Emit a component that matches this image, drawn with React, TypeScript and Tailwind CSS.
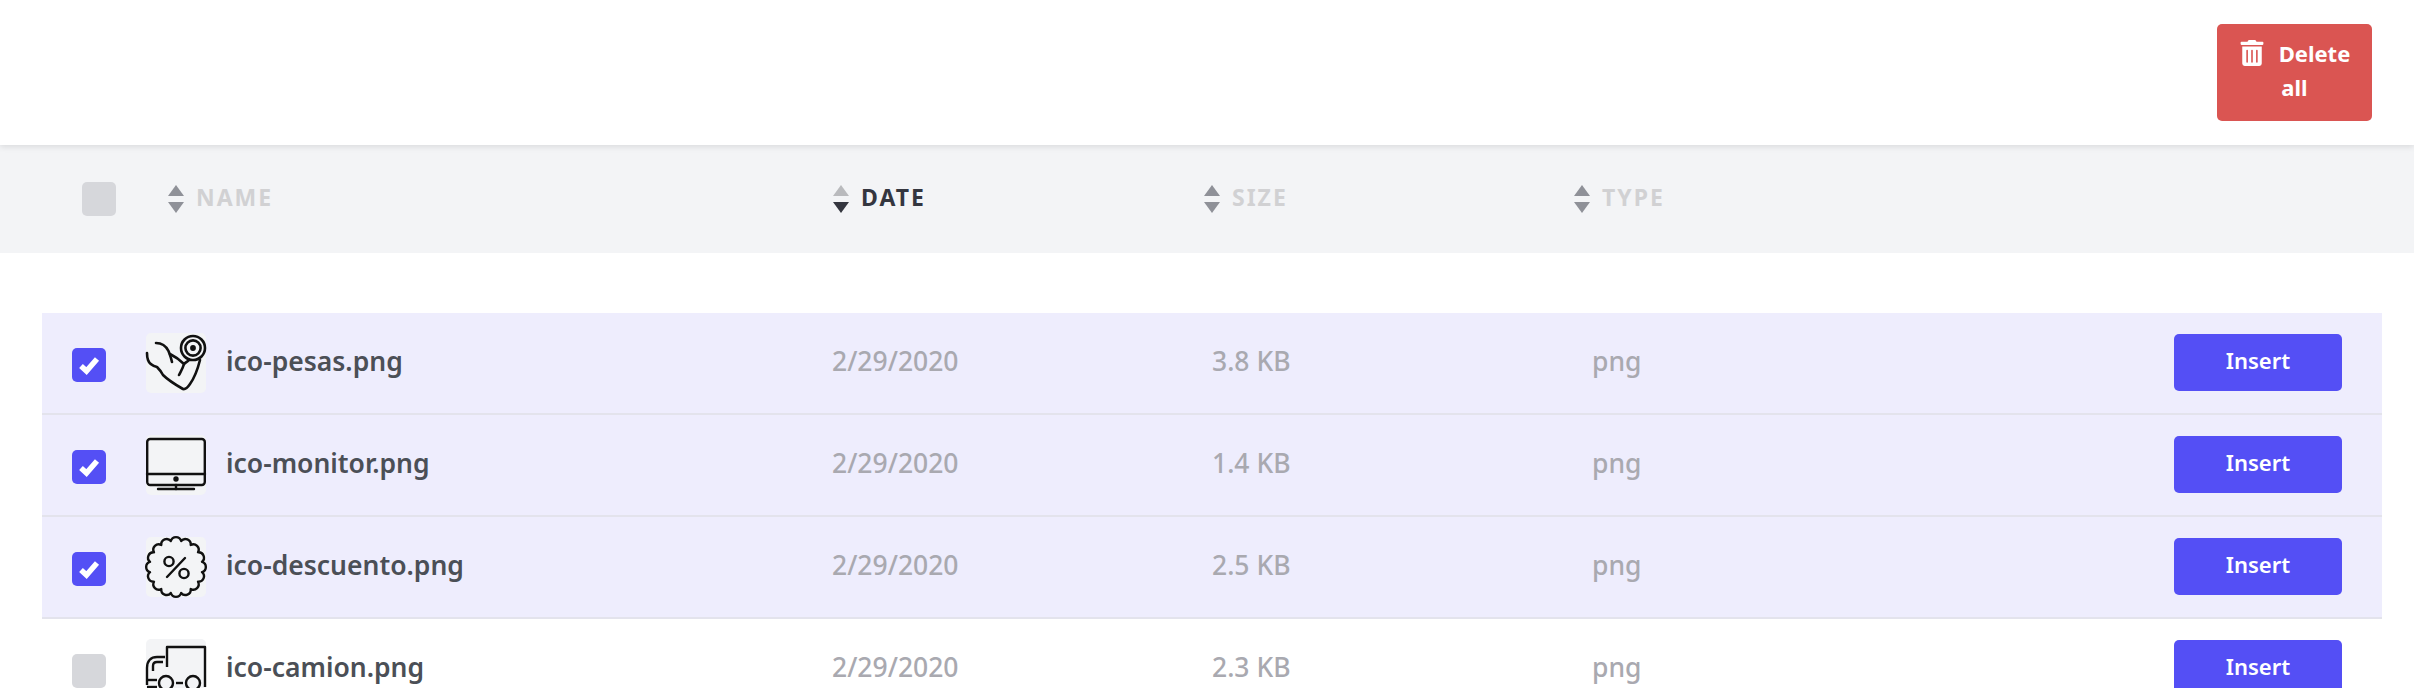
import React from 'react'
import { FaTrashAlt } from 'react-icons/fa'

type FileRow = {
  name: string
  size: string
  checked: boolean
  icon: React.ReactNode
}

// scalloped badge outline for the discount icon
const scallops = 16
const badgePoint = (i: number) => {
  const a = (i / scallops) * Math.PI * 2 - Math.PI / 2 - Math.PI / scallops
  return `${(30 + 26.5 * Math.cos(a)).toFixed(2)} ${(30 + 26.5 * Math.sin(a)).toFixed(2)}`
}
const badgePath =
  `M${badgePoint(0)} ` +
  Array.from({ length: scallops }, (_, i) => `A5.4 5.4 0 0 1 ${badgePoint(i + 1)}`).join(' ') +
  ' Z'

function Thumb({ children }: { children: React.ReactNode }) {
  return (
    <div className="w-[60px] h-[60px] shrink-0 bg-[#f3f4f6] rounded-[5px]">
      <svg viewBox="0 0 60 60" className="w-[60px] h-[60px] overflow-visible" fill="none" stroke="#111" strokeLinecap="round" strokeLinejoin="round">
        {children}
      </svg>
    </div>
  )
}

const rows: FileRow[] = [
  {
    name: 'ico-pesas.png',
    size: '3.8 KB',
    checked: true,
    icon: (
      <Thumb>
        <g strokeWidth="2.6">
          <circle cx="47" cy="15" r="12" />
          <circle cx="47" cy="15" r="7.6" />
          <circle cx="47" cy="15" r="1.6" fill="#111" />
          <path d="M10 10 C15 10 20 13 22.5 18 C23.5 21 25 24 26 29" />
          <path d="M24 21 C28 23 33 26 38 31 C37 35 35 38 33 42" />
          <path d="M38 31 C39 30 41 29 43 27" />
          <path d="M54 27 C52 35 49 44 44 51 C42 54 39 56.5 37 56 C30 52 23 48 17 42 C15 38 13 36 11 34 C7 33 3 30 2 27 C1 24 1 22 1 20" />
        </g>
      </Thumb>
    ),
  },
  {
    name: 'ico-monitor.png',
    size: '1.4 KB',
    checked: true,
    icon: (
      <Thumb>
        <g strokeWidth="2.4">
          <rect x="1.2" y="4" width="57.6" height="46" rx="3" />
          <path d="M1 39 H59" />
          <circle cx="30" cy="44" r="1.5" fill="#111" />
          <path d="M30 50 V54" />
          <path d="M12 54 H48" />
        </g>
      </Thumb>
    ),
  },
  {
    name: 'ico-descuento.png',
    size: '2.5 KB',
    checked: true,
    icon: (
      <Thumb>
        <g strokeWidth="2.4">
          <path d={badgePath} />
          <circle cx="23" cy="24.5" r="4.6" />
          <circle cx="38" cy="36.5" r="4.6" />
          <path d="M39 21 L21 40" />
        </g>
      </Thumb>
    ),
  },
  {
    name: 'ico-camion.png',
    size: '2.3 KB',
    checked: false,
    icon: (
      <Thumb>
        <g strokeWidth="2.4" strokeLinecap="butt">
          <path d="M21 28 V8 H59 V48" />
          <path d="M1 46 V29 C1 22 5 18 11 18 H19" />
          <path d="M7 32 V27 C7 24 9 23 11 23 H17" />
          <circle cx="20" cy="44" r="7" />
          <circle cx="47" cy="44" r="7" />
          <path d="M30 44 H37" />
          <path d="M1 41 H11" />
          <path d="M1 48 H11" />
        </g>
      </Thumb>
    ),
  },
]

function SortIcon({ up = '#8f9198', down = '#8f9198' }: { up?: string; down?: string }) {
  return (
    <svg viewBox="0 0 16 28" className="w-[16px] h-[28px] shrink-0">
      <path d="M8 0 L16 11 H0 Z" fill={up} />
      <path d="M0 17 H16 L8 28 Z" fill={down} />
    </svg>
  )
}

function HeaderCell({ label, active }: { label: string; active?: boolean }) {
  return (
    <div className="flex items-center gap-[12px]">
      {active ? <SortIcon up="#b9babd" down="#34363f" /> : <SortIcon />}
      <span className={`text-[23px] font-bold tracking-[2px] -mt-[3px] ${active ? 'text-[#34363f]' : 'text-[#d1d1d3]'}`}>{label}</span>
    </div>
  )
}

export default function App() {
  return (
    <div className="h-screen overflow-hidden bg-white font-['Noto_Sans',sans-serif]">
      {/* Top bar */}
      <div className="relative z-10 h-[145px] flex justify-end items-start pt-[24px] pr-[42px] bg-white shadow-[0_2px_6px_rgba(0,0,0,0.1)]">
        <button className="w-[155px] h-[97px] pb-[5px] bg-[#da5552] rounded-[5px] text-white text-[22px] font-bold leading-[34px] px-[20px] text-center">
          <FaTrashAlt className="inline-block text-[26px] mr-[14px] -mt-[6px]" />
          Delete all
        </button>
      </div>

      {/* Table header */}
      <div className="h-[108px] bg-[#f3f4f6] flex items-center pl-[82px]">
        <div className="w-[34px] h-[34px] bg-[#d6d7db] rounded-[5px] mr-[52px] shrink-0" />
        <div className="w-[665px]"><HeaderCell label="NAME" /></div>
        <div className="w-[371px]"><HeaderCell label="DATE" active /></div>
        <div className="w-[370px]"><HeaderCell label="SIZE" /></div>
        <div><HeaderCell label="TYPE" /></div>
      </div>

      {/* File rows */}
      <div className="mt-[60px] mr-[32px] ml-[42px]">
        {rows.map((row) => (
          <div
            key={row.name}
            className={`h-[102px] flex items-center pl-[30px] pr-[40px] border-b-2 border-[#e3e3ec] ${row.checked ? 'bg-[#eeedfd]' : 'bg-white'}`}
          >
            <div className={`w-[34px] h-[34px] mt-[4px] rounded-[5px] shrink-0 flex items-center justify-center ${row.checked ? 'bg-[#544ff5]' : 'bg-[#d6d7db]'}`}>
              {row.checked && (
                <svg viewBox="0 0 34 34" className="w-[34px] h-[34px]" fill="none" stroke="#fff" strokeWidth="5.5">
                  <path d="M9 18 L14.5 23 L25 11" />
                </svg>
              )}
            </div>
            <div className="ml-[40px]">{row.icon}</div>
            <div className="ml-[20px] w-[606px] text-[26.5px] font-semibold text-[#4b4f56] -mt-[3px]">{row.name}</div>
            <div className="w-[380px] text-[26.5px] font-medium text-[#a9a9b0] -mt-[3px]">2/29/2020</div>
            <div className="w-[380px] text-[26.5px] font-medium text-[#a9a9b0] -mt-[3px]">{row.size}</div>
            <div className="flex-1 text-[26.5px] font-medium text-[#a9a9b0] -mt-[3px]">png</div>
            <button className="w-[168px] h-[57px] pb-[3px] -mt-[2px] bg-[#544ff5] rounded-[5px] text-white text-[22px] font-semibold">Insert</button>
          </div>
        ))}
      </div>
    </div>
  )
}
